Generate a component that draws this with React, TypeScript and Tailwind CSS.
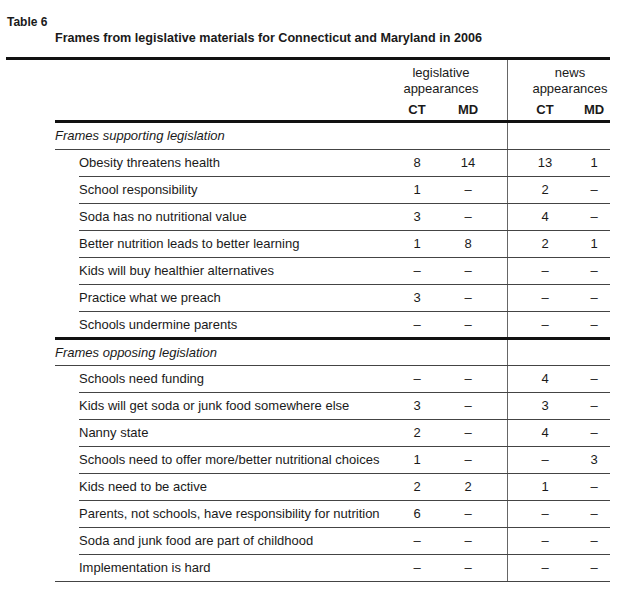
import React from "react";

type Row = { label: string; v: string[] };

const D = "–";

const groups: { title: string; rows: Row[] }[] = [
  {
    title: "Frames supporting legislation",
    rows: [
      { label: "Obesity threatens health", v: ["8", "14", "13", "1"] },
      { label: "School responsibility", v: ["1", D, "2", D] },
      { label: "Soda has no nutritional value", v: ["3", D, "4", D] },
      { label: "Better nutrition leads to better learning", v: ["1", "8", "2", "1"] },
      { label: "Kids will buy healthier alternatives", v: [D, D, D, D] },
      { label: "Practice what we preach", v: ["3", D, D, D] },
      { label: "Schools undermine parents", v: [D, D, D, D] },
    ],
  },
  {
    title: "Frames opposing legislation",
    rows: [
      { label: "Schools need funding", v: [D, D, "4", D] },
      { label: "Kids will get soda or junk food somewhere else", v: ["3", D, "3", D] },
      { label: "Nanny state", v: ["2", D, "4", D] },
      { label: "Schools need to offer more/better nutritional choices", v: ["1", D, D, "3"] },
      { label: "Kids need to be active", v: ["2", "2", "1", D] },
      { label: "Parents, not schools, have responsibility for nutrition", v: ["6", D, D, D] },
      { label: "Soda and junk food are part of childhood", v: [D, D, D, D] },
      { label: "Implementation is hard", v: [D, D, D, D] },
    ],
  },
];

const Cells = ({ v }: { v: string[] }) => (
  <>
    <div className="w-[118px] flex border-r border-[#666] h-full items-center">
      <div className="w-[54px] text-center">{v[0]}</div>
      <div className="w-[48px] text-center">{v[1]}</div>
    </div>
    <div className="w-[102px] flex h-full items-center">
      <div className="w-[74px] text-center">{v[2]}</div>
      <div className="w-[24px] text-center">{v[3]}</div>
    </div>
  </>
);

const App = () => {
  return (
    <main
      className="bg-white min-h-screen text-[#1a1a1a] pl-[6px] pt-[14px]"
      style={{ fontFamily: '"Liberation Sans", Arial, sans-serif' }}
    >
      <div className="text-[12px] leading-[16px] font-bold pl-[1px]">Table 6</div>
      <div className="text-[12.6px] leading-[16px] font-bold pl-[49px]">
        Frames from legislative materials for Connecticut and Maryland in 2006
      </div>

      <div className="w-[604px] mt-[11px] border-t-[3px] border-[#111]">
        <div className="ml-[49px] w-[555px] border-b border-[#444] text-[13px]">
          {/* header */}
          <div className="flex h-[63px] border-b-[3px] border-[#111]">
            <div className="flex-1"></div>
            <div className="w-[118px] border-r border-[#666] pt-[5px]">
              <div className="w-[102px] text-center leading-[16px]">
                <div>legislative</div>
                <div>appearances</div>
              </div>
              <div className="flex font-bold mt-[5px] leading-[16px]">
                <div className="w-[54px] text-center">CT</div>
                <div className="w-[48px] text-center">MD</div>
              </div>
            </div>
            <div className="w-[102px] pt-[5px]">
              <div className="ml-[22px] w-[80px] text-center leading-[16px]">
                <div>news</div>
                <div>appearances</div>
              </div>
              <div className="flex font-bold mt-[5px] leading-[16px]">
                <div className="w-[74px] text-center">CT</div>
                <div className="w-[24px] text-center">MD</div>
              </div>
            </div>
          </div>

          {groups.map((g, gi) => (
            <div key={g.title} className={gi > 0 ? "border-t-[3px] border-[#111]" : ""}>
              <div
                className={
                  "flex items-center border-b border-[#444] " + (gi > 0 ? "h-[26px]" : "h-[27px]")
                }
              >
                <div className="flex-1 italic">{g.title}</div>
                <Cells v={["", "", "", ""]} />
              </div>
              {g.rows.map((r, ri) => (
                <div
                  key={r.label}
                  className={
                    "ml-[24px] flex items-center " +
                    (ri < g.rows.length - 1
                      ? "h-[27px] border-b border-[#444]"
                      : gi === 0
                        ? "h-[25px]"
                        : "h-[26px]")
                  }
                >
                  <div className="flex-1">{r.label}</div>
                  <Cells v={r.v} />
                </div>
              ))}
            </div>
          ))}
        </div>
      </div>
    </main>
  );
};

export default App;
